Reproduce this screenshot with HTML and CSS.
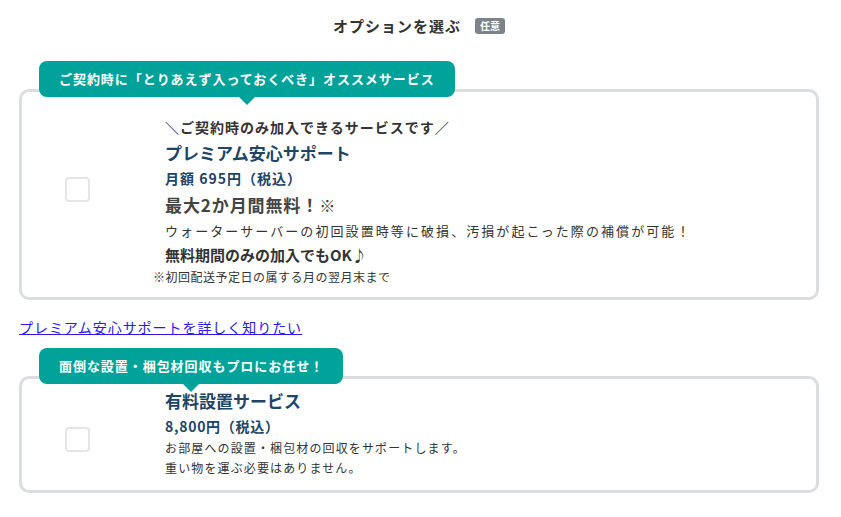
FILE: index.html
```html
<!DOCTYPE html>
<html lang="ja">
<head>
<meta charset="utf-8">
<title>オプションを選ぶ</title>
<link rel="stylesheet" href="styles.css">
</head>
<body>
<div class="page">
  <div class="heading">
    <span class="heading-text">オプションを選ぶ</span>
    <span class="badge">任意</span>
  </div>

  <div class="option option-premium">
    <div class="tag"><span class="tag-text">ご契約時に「とりあえず入っておくべき」オススメサービス</span></div>
    <div class="card card-premium">
      <div class="check-col"><span class="checkbox checkbox-premium"></span></div>
      <div class="body">
        <p class="lead">＼ご契約時のみ加入できるサービスです／</p>
        <p class="name name-premium">プレミアム安心サポート</p>
        <p class="price price-premium">月額 695円（税込）</p>
        <p class="free">最大2か月間無料！<span class="mark">※</span></p>
        <p class="desc-wide">ウォーターサーバーの初回設置時等に破損、汚損が起こった際の補償が可能！</p>
        <p class="ok">無料期間のみの加入でもOK♪</p>
        <p class="note">※初回配送予定日の属する月の翌月末まで</p>
      </div>
    </div>
  </div>

  <a class="more" href="#">プレミアム安心サポートを詳しく知りたい</a>

  <div class="option option-install">
    <div class="tag"><span class="tag-text">面倒な設置・梱包材回収もプロにお任せ！</span></div>
    <div class="card card-install">
      <div class="check-col"><span class="checkbox checkbox-install"></span></div>
      <div class="body">
        <p class="name name-install">有料設置サービス</p>
        <p class="price price-install">8,800円（税込）</p>
        <p class="desc desc-first">お部屋への設置・梱包材の回収をサポートします。</p>
        <p class="desc">重い物を運ぶ必要はありません。</p>
      </div>
    </div>
  </div>
</div>
</body>
</html>
```

FILE: styles.css
```css
* { box-sizing: border-box; }
html, body { margin: 0; padding: 0; background: #fff; }
body {
  font-family: "Noto Sans CJK JP", "Noto Sans", sans-serif;
  color: #333;
}
p { margin: 0; }

.page {
  width: 800px;
  margin-left: 19px;
  padding-top: 16px;
  display: flex;
  flex-direction: column;
}

.heading {
  display: flex;
  justify-content: center;
  align-items: center;
  gap: 14px;
  height: 20px;
}
.heading-text {
  font-size: 15px;
  font-weight: 700;
  letter-spacing: 1px;
  line-height: 20px;
  color: #333;
}
.badge {
  display: inline-flex;
  align-items: center;
  justify-content: center;
  width: 30px;
  height: 16px;
  border-radius: 3px;
  background: #7b838a;
  color: #fff;
  font-size: 10px;
  font-weight: 700;
  line-height: 16px;
}

.option {
  display: flex;
  flex-direction: column;
  align-items: flex-start;
}
.option-premium { margin-top: 25px; }
.option-install { margin-top: 11px; }

.tag {
  position: relative;
  z-index: 2;
  margin-left: 20px;
  margin-bottom: -8px;
  height: 36px;
  padding: 0 20px;
  background: #00a299;
  border-radius: 8px;
  display: flex;
  align-items: center;
}
.option-install .tag { padding: 0 19px 0 20px; }
.tag::after {
  content: "";
  position: absolute;
  left: 50%;
  top: 100%;
  margin-left: -8px;
  border-left: 8px solid transparent;
  border-right: 8px solid transparent;
  border-top: 8px solid #00a299;
}
.tag-text {
  color: #fff;
  font-size: 13px;
  font-weight: 700;
  letter-spacing: 0.95px;
  line-height: 20px;
  white-space: nowrap;
}

.card {
  width: 800px;
  border: 3px solid #dcdde0;
  border-radius: 10px;
  display: flex;
  align-items: flex-start;
  background: #fff;
}
.card-premium { padding: 24px 0 10px; }
.card-install { padding: 9px 0 12px; }

.check-col {
  width: 143px;
  flex: none;
  padding-left: 43px;
}
.checkbox {
  display: block;
  width: 25px;
  height: 25px;
  border: 2px solid #e4e5e7;
  border-radius: 4px;
  background: #fff;
}
.checkbox-premium { margin-top: 61px; }
.checkbox-install { margin-top: 39px; }

.body {
  display: flex;
  flex-direction: column;
}

.lead {
  font-size: 14px;
  font-weight: 700;
  line-height: 22px;
  letter-spacing: 1px;
  color: #333;
}
.name {
  font-size: 17px;
  font-weight: 700;
  line-height: 26px;
  color: #1e4466;
}
.name-premium { margin-top: 2px; letter-spacing: 0; }
.name-install { letter-spacing: 0; }
.price {
  font-size: 14px;
  font-weight: 700;
  line-height: 22px;
  color: #1e4466;
  margin-top: 1px;
}
.price-premium { letter-spacing: 1px; }
.price-install { letter-spacing: 0.7px; }
.free {
  margin-top: 3px;
  font-size: 17px;
  font-weight: 700;
  line-height: 26px;
  letter-spacing: 0.9px;
  color: #444;
}
.mark { font-weight: 400; font-size: 16px; }
.desc-wide {
  margin-top: 1px;
  font-size: 13px;
  line-height: 24px;
  letter-spacing: 2.08px;
  color: #333;
  white-space: nowrap;
}
.ok {
  font-size: 15px;
  font-weight: 700;
  line-height: 24px;
  color: #333;
}
.note {
  margin-left: -12px;
  font-size: 12px;
  line-height: 20px;
  letter-spacing: 0.5px;
  color: #333;
}
.desc {
  font-size: 12px;
  line-height: 20px;
  letter-spacing: 1.13px;
  color: #333;
}
.desc-first { line-height: 21px; }

.more {
  align-self: flex-start;
  margin-top: 17px;
  font-size: 14px;
  line-height: 20px;
  letter-spacing: 0.95px;
  color: #2a17f2;
  text-decoration: underline;
}
```
